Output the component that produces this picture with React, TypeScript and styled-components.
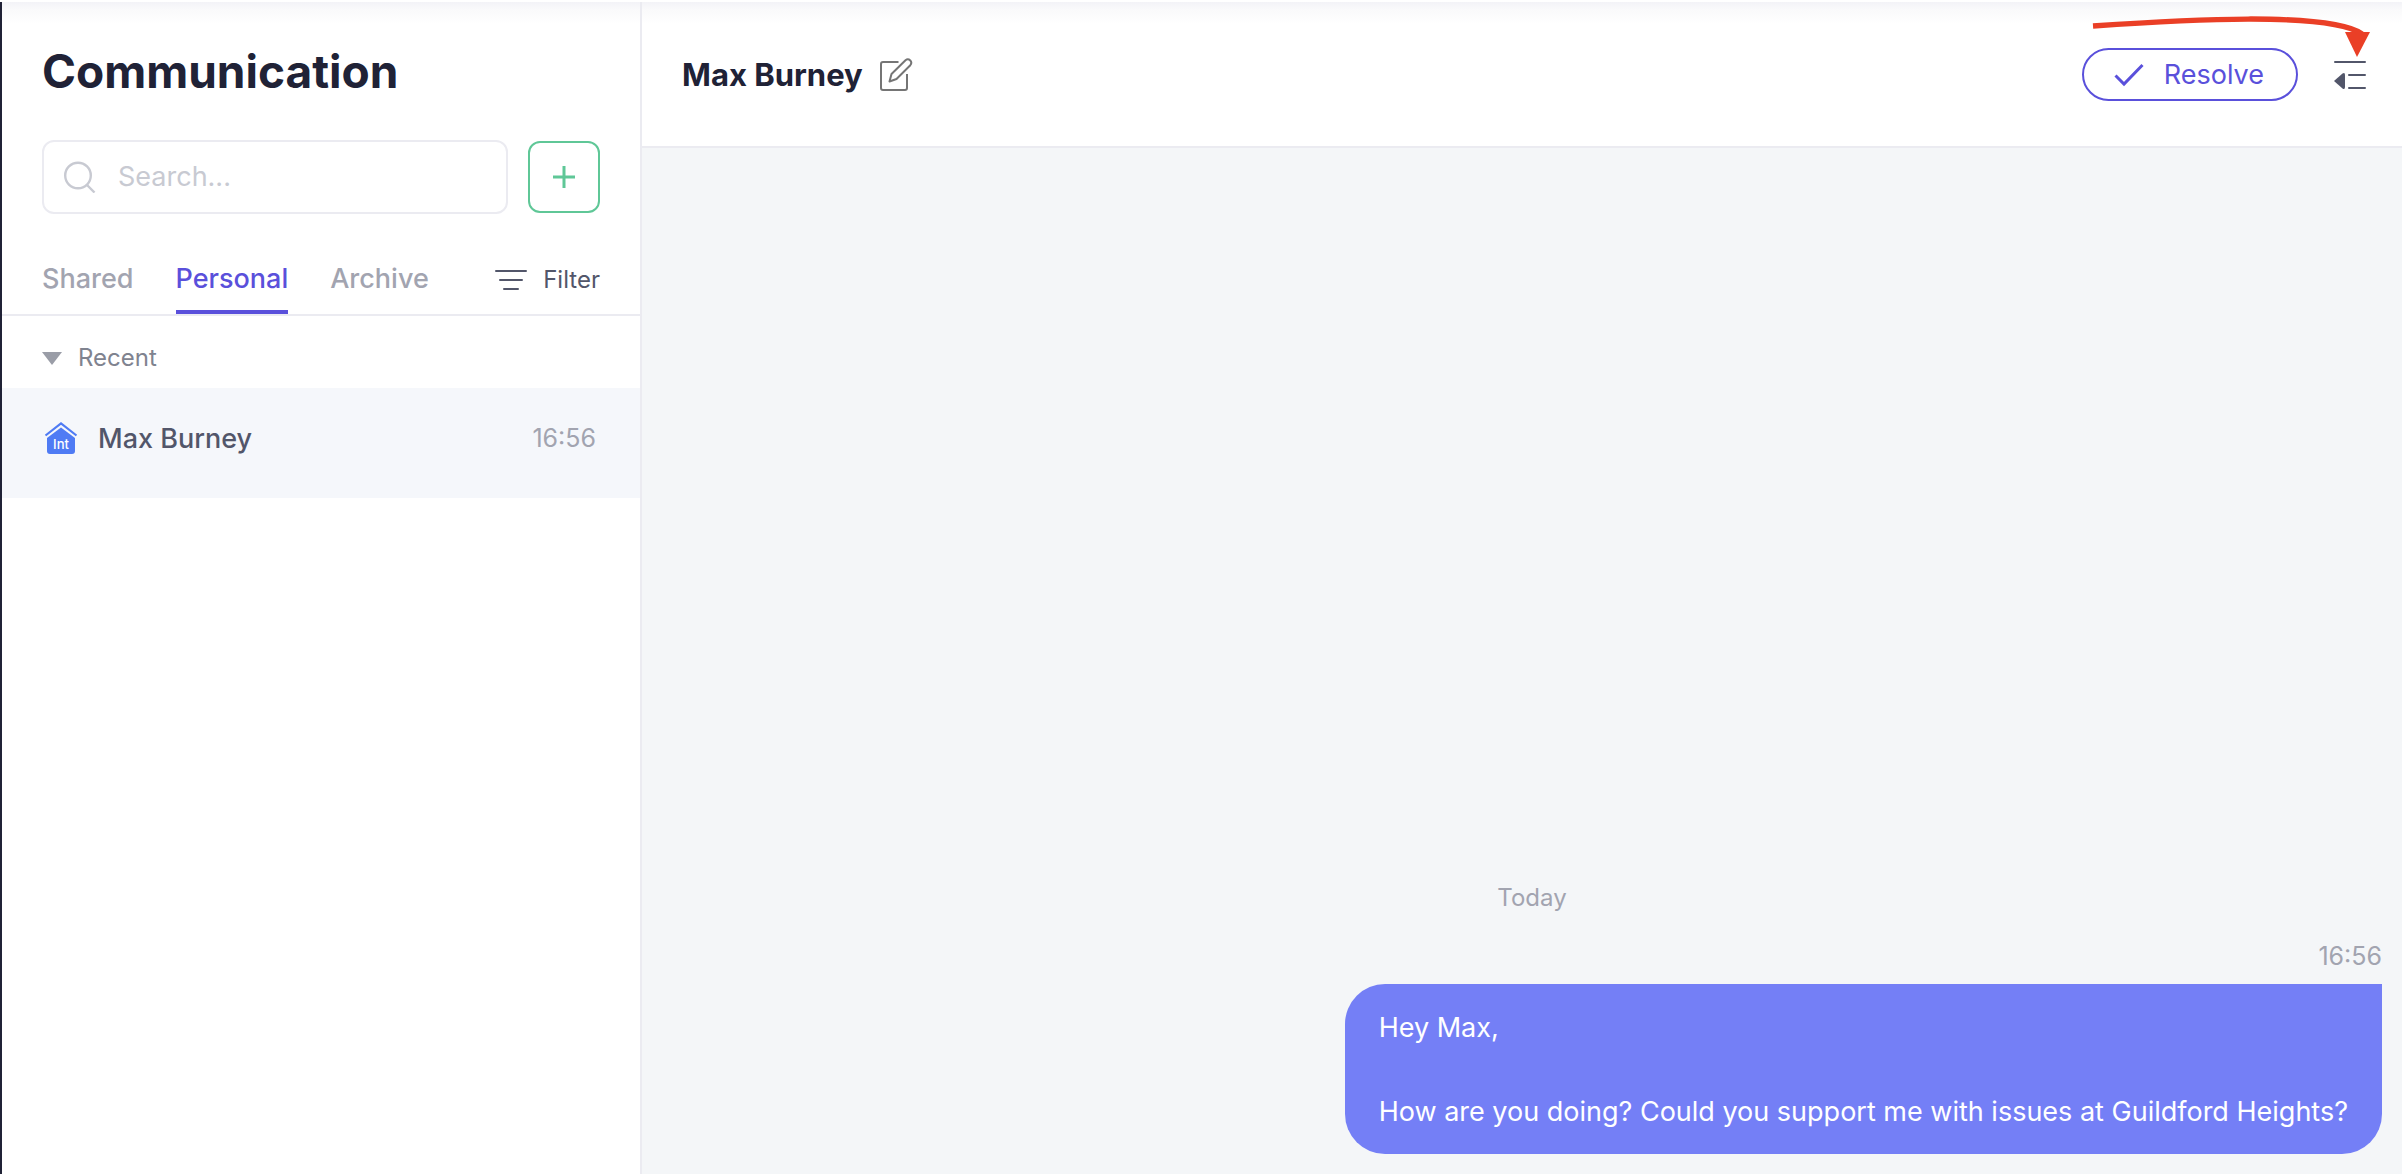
import React from "react";
import styled, { createGlobalStyle } from "styled-components";

const color = {
  ink: "#202236",
  slate: "#52566a",
  gray: "#7f838f",
  muted: "#a2a4b0",
  faint: "#c8cad2",
  line: "#ebebf1",
  canvas: "#f4f6f8",
  row: "#f5f7fb",
  indigo: "#5a50db",
  bubble: "#747ff6",
  green: "#5fc797",
  blue: "#4f7bf4",
  red: "#ea3f26",
};

const GlobalStyle = createGlobalStyle`
  *, *::before, *::after { box-sizing: border-box; }
  body {
    margin: 0;
    background: #fff;
    color: ${color.ink};
    font-family: Inter, "Liberation Sans", sans-serif;
    font-size: 27px;
    line-height: 40px;
    -webkit-font-smoothing: antialiased;
  }
  button, input { font: inherit; color: inherit; }
  button { padding: 0; border: 0; background: none; cursor: pointer; }
  h1, h2, p, ul { margin: 0; padding: 0; }
  svg { display: block; flex: none; }
`;

const Page = styled.div`
  display: flex;
  min-height: 100vh;
  border-top: 2px solid #fff;
`;

const topShade = "linear-gradient(#f3f3f7, #fafafb 8px, #fff 22px)";

const Sidebar = styled.aside`
  display: flex;
  flex-direction: column;
  flex: none;
  width: 642px;
  border-left: 2px solid ${color.ink};
  border-right: 2px solid ${color.line};
  background: ${topShade};
`;

const SidebarTop = styled.div`
  padding: 40px 40px 0;
`;

const PageTitle = styled.h1`
  font-size: 46px;
  font-weight: 700;
  line-height: 58px;
`;

const SearchRow = styled.div`
  display: flex;
  align-items: center;
  gap: 20px;
  margin-top: 40px;
`;

const SearchBox = styled.label`
  display: flex;
  align-items: center;
  gap: 22px;
  flex: 1;
  min-width: 0;
  height: 74px;
  padding: 0 20px;
  border: 2px solid ${color.line};
  border-radius: 12px;
`;

const SearchInput = styled.input`
  flex: 1;
  min-width: 0;
  padding: 0;
  border: 0;
  outline: 0;
  background: none;
  &::placeholder { color: ${color.faint}; opacity: 1; }
`;

const AddButton = styled.button`
  display: grid;
  place-items: center;
  width: 72px;
  height: 72px;
  border: 2px solid ${color.green};
  border-radius: 12px;
`;

const TabBar = styled.nav`
  display: flex;
  align-items: flex-start;
  gap: 42px;
  margin-top: 44px;
  padding: 0 40px;
  border-bottom: 2px solid ${color.line};
`;

const Tab = styled.button<{ $active?: boolean }>`
  height: 56px;
  padding-bottom: 10px;
  border-bottom: 4px solid ${(p) => (p.$active ? color.indigo : "transparent")};
  color: ${(p) => (p.$active ? color.indigo : color.muted)};
  font-weight: 500;
`;

const FilterButton = styled.button`
  display: flex;
  align-items: center;
  gap: 16px;
  height: 44px;
  margin-left: auto;
  color: ${color.slate};
  font-size: 24px;
`;

const GroupToggle = styled.button`
  display: flex;
  align-items: center;
  gap: 16px;
  height: 72px;
  padding: 12px 40px 0;
  color: ${color.gray};
  font-size: 24px;
`;

const ThreadList = styled.ul`
  list-style: none;
`;

const Thread = styled.a`
  display: flex;
  align-items: flex-start;
  height: 110px;
  padding: 30px 44px 0 42px;
  background: ${color.row};
  color: ${color.slate};
  text-decoration: none;
`;

const ThreadName = styled.span`
  flex: 1;
  margin-left: 20px;
  font-weight: 500;
  line-height: 42px;
`;

const Time = styled.time`
  color: ${color.muted};
  font-size: 25px;
`;

const Main = styled.main`
  display: flex;
  flex-direction: column;
  flex: 1;
  min-width: 0;
  background: ${color.canvas};
`;

const Header = styled.header`
  position: relative;
  display: flex;
  align-items: center;
  height: 146px;
  padding: 1px 36px 0 40px;
  border-bottom: 2px solid ${color.line};
  background: ${topShade};
`;

const ThreadTitle = styled.h2`
  margin-right: 16px;
  font-size: 31px;
  font-weight: 700;
  line-height: 42px;
`;

const Actions = styled.div`
  display: flex;
  align-items: center;
  gap: 36px;
  margin-left: auto;
`;

const ResolveButton = styled.button`
  display: flex;
  align-items: center;
  gap: 20px;
  height: 53px;
  padding: 1px 32px 0 30px;
  border: 2px solid ${color.indigo};
  border-radius: 27px;
  color: ${color.indigo};
`;

const Arrow = styled.svg`
  position: absolute;
  top: 8px;
  right: 28px;
  pointer-events: none;
`;

const Messages = styled.section`
  display: flex;
  flex: 1;
  flex-direction: column;
  align-items: flex-end;
  justify-content: flex-end;
  padding: 20px 20px 20px 40px;
`;

const DayLabel = styled.p`
  align-self: center;
  margin-bottom: 18px;
  color: ${color.muted};
  font-size: 24px;
`;

const Bubble = styled.div`
  margin-top: 8px;
  padding: 23px 34px 21px;
  border-radius: 40px 0 40px 40px;
  background: ${color.bubble};
  color: #fff;
  line-height: 42px;
  white-space: pre-line;
`;

const SearchIcon = () => (
  <svg width="32" height="32" viewBox="0 0 32 32" fill="none" stroke={color.faint} strokeWidth="2.4">
    <circle cx="14" cy="14.500" r="12.800" />
    <path d="M23 24 L30.500 31.500" />
  </svg>
);

const PlusIcon = () => (
  <svg width="22" height="22" viewBox="0 0 22 22" fill="none" stroke={color.green} strokeWidth="3">
    <path d="M11 0V22M0 11H22" />
  </svg>
);

const FilterIcon = () => (
  <svg width="32" height="20" viewBox="0 0 32 20" fill="none" stroke={color.slate} strokeWidth="2" strokeLinecap="round">
    <path d="M1 1H31M5 10H27M9 19H23" />
  </svg>
);

const CaretIcon = () => (
  <svg width="20" height="13" viewBox="0 0 20 13" fill="#9a9da7">
    <path d="M0 0H20L10 13Z" />
  </svg>
);

const HouseIcon = () => (
  <svg width="34" height="40" viewBox="0 0 34 40">
    <path d="M1.500 17.500 L17 5.500 L32.500 17.500" fill="none" stroke={color.blue} strokeWidth="2.200" />
    <path d="M17 9.500 L31 20 V33 Q31 36 28 36 H6 Q3 36 3 33 V20 Z" fill={color.blue} />
    <text x="17" y="31" fill="#fff" fontSize="13" fontWeight="500" textAnchor="middle">Int</text>
  </svg>
);

const EditIcon = () => (
  <svg width="34" height="34" viewBox="0 0 34 34" fill="none" stroke="#757575" strokeWidth="2" strokeLinejoin="round">
    <path d="M19.500 4H4Q2 4 2 6V30Q2 32 4 32H26Q28 32 28 30V16" />
    <path d="M10.500 23.500 L12.500 16 L26.500 2.200 Q29 0.300 31.300 2.500 Q33.300 4.800 31.300 7.200 L17.500 21 Z" />
  </svg>
);

const CheckIcon = () => (
  <svg width="30" height="24" viewBox="0 0 30 24" fill="none" stroke={color.indigo} strokeWidth="3">
    <path d="M1.500 12.500 L10 21 L28.500 2" />
  </svg>
);

const PanelIcon = () => (
  <svg width="32" height="28" viewBox="0 0 32 28">
    <path d="M1 1H31M15 14H31M15 27H31" fill="none" stroke={color.slate} strokeWidth="2" strokeLinecap="round" />
    <path d="M0 20 L8.500 12.500 Q11 11 11 14 V26 Q11 29 8.500 27.500 Z" fill={color.slate} />
  </svg>
);

export default function App() {
  return (
    <>
      <GlobalStyle />
      <Page>
        <Sidebar>
          <SidebarTop>
            <PageTitle>Communication</PageTitle>
            <SearchRow>
              <SearchBox>
                <SearchIcon />
                <SearchInput type="search" aria-label="Search" placeholder="Search..." />
              </SearchBox>
              <AddButton aria-label="New conversation"><PlusIcon /></AddButton>
            </SearchRow>
          </SidebarTop>
          <TabBar>
            <Tab>Shared</Tab>
            <Tab $active aria-current="page">Personal</Tab>
            <Tab>Archive</Tab>
            <FilterButton><FilterIcon />Filter</FilterButton>
          </TabBar>
          <GroupToggle aria-expanded="true"><CaretIcon />Recent</GroupToggle>
          <ThreadList>
            <li>
              <Thread href="#max-burney">
                <HouseIcon />
                <ThreadName>Max Burney</ThreadName>
                <Time>16:56</Time>
              </Thread>
            </li>
          </ThreadList>
        </Sidebar>
        <Main>
          <Header>
            <ThreadTitle>Max Burney</ThreadTitle>
            <button aria-label="Rename conversation"><EditIcon /></button>
            <Actions>
              <ResolveButton><CheckIcon />Resolve</ResolveButton>
              <button aria-label="Toggle details panel"><PanelIcon /></button>
            </Actions>
            <Arrow width="284" height="52" viewBox="0 0 284 52" aria-hidden="true">
              <path d="M3 16 C90 10 240 1 272 24" fill="none" stroke={color.red} strokeWidth="5.500" />
              <path d="M255 22H280L267 47Z" fill={color.red} />
            </Arrow>
          </Header>
          <Messages>
            <DayLabel>Today</DayLabel>
            <Time>16:56</Time>
            <Bubble>{"Hey Max,\n\nHow are you doing? Could you support me with issues at Guildford Heights?"}</Bubble>
          </Messages>
        </Main>
      </Page>
    </>
  );
}
